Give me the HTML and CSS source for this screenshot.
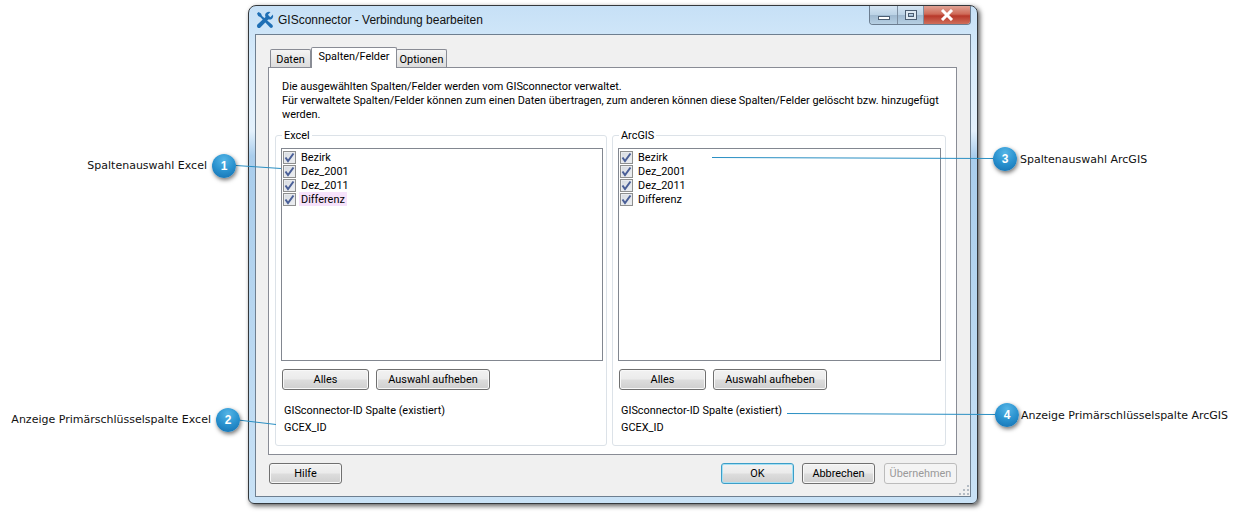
FILE: index.html
```html
<!DOCTYPE html>
<html lang="de">
<head>
  <meta charset="UTF-8" />
  <title>GISconnector - Verbindung bearbeiten</title>
  <link rel="stylesheet" href="styles.css">
</head>
<body>
  <svg width="0" height="0" class="defs">
    <symbol id="check" viewBox="0 0 13 13">
      <path d="M2.500 6.500 L5 10 L10.500 2.500" fill="none" stroke="#4a5f97" stroke-width="2"/>
    </symbol>
  </svg>

  <main class="window">
    <header class="titlebar">
      <svg class="app-icon" width="18" height="18" viewBox="0 0 18 18">
        <path d="M1 2.500 L2.500 1 L5 2.500 L6 5 L16.500 14 Q17.500 15.500 16.300 16.500 Q15 17.500 13.800 16.300 L4.500 6.200 L2.200 5 Z" fill="#1f6fb5"/>
        <path d="M17 3.600 L14.300 6.200 L11.900 3.800 L14.500 1 Q11.400 0 9.700 2.200 Q8.500 4 9.500 6 L1.400 13.600 Q0.300 15.200 1.500 16.400 Q3 17.500 4.400 16.400 L12.200 8.400 Q14.400 9 16.100 7.700 Q17.700 6 17 3.600 Z" fill="#1f6fb5"/>
      </svg>
      <h1 class="title">GISconnector - Verbindung bearbeiten</h1>
      <div class="controls">
        <span class="ctl ctl-min"><i></i></span>
        <span class="ctl ctl-max"><i></i></span>
        <span class="ctl ctl-close">
          <svg width="16" height="12" viewBox="0 0 16 12"><path d="M3 1 L13 11 M13 1 L3 11" stroke="#fff" stroke-width="3" fill="none"/></svg>
        </span>
      </div>
    </header>

    <div class="client">
      <nav class="tabs">
        <span class="tab tab-data">Daten</span>
        <span class="tab active">Spalten/Felder</span>
        <span class="tab tab-opt">Optionen</span>
      </nav>

      <section class="pane">
        <p class="intro">Die ausgewählten Spalten/Felder werden vom GISconnector verwaltet.<br>Für verwaltete Spalten/Felder können zum einen Daten übertragen, zum anderen können diese Spalten/Felder gelöscht bzw. hinzugefügt werden.</p>

        <div class="groups">
          <fieldset class="group group-excel">
            <legend>Excel</legend>
            <ul class="list">
              <li><span class="cb"><svg width="13" height="13"><use href="#check"/></svg></span><span class="lbl">Bezirk</span></li>
              <li><span class="cb"><svg width="13" height="13"><use href="#check"/></svg></span><span class="lbl">Dez_2001</span></li>
              <li><span class="cb"><svg width="13" height="13"><use href="#check"/></svg></span><span class="lbl">Dez_2011</span></li>
              <li><span class="cb"><svg width="13" height="13"><use href="#check"/></svg></span><span class="lbl mark">Differenz</span></li>
            </ul>
            <div class="row">
              <button class="btn btn-all">Alles</button>
              <button class="btn btn-clear">Auswahl aufheben</button>
            </div>
            <p class="id-head">GISconnector-ID Spalte (existiert)</p>
            <p class="id-value">GCEX_ID</p>
          </fieldset>

          <fieldset class="group group-arc">
            <legend>ArcGIS</legend>
            <ul class="list">
              <li><span class="cb"><svg width="13" height="13"><use href="#check"/></svg></span><span class="lbl">Bezirk</span></li>
              <li><span class="cb"><svg width="13" height="13"><use href="#check"/></svg></span><span class="lbl">Dez_2001</span></li>
              <li><span class="cb"><svg width="13" height="13"><use href="#check"/></svg></span><span class="lbl">Dez_2011</span></li>
              <li><span class="cb"><svg width="13" height="13"><use href="#check"/></svg></span><span class="lbl">Differenz</span></li>
            </ul>
            <div class="row">
              <button class="btn btn-all">Alles</button>
              <button class="btn btn-clear">Auswahl aufheben</button>
            </div>
            <p class="id-head">GISconnector-ID Spalte (existiert)</p>
            <p class="id-value">GCEX_ID</p>
          </fieldset>
        </div>
      </section>

      <footer class="footer">
        <button class="btn btn-foot">Hilfe</button>
        <div class="spacer"></div>
        <button class="btn btn-foot btn-ok">OK</button>
        <button class="btn btn-foot btn-cancel">Abbrechen</button>
        <button class="btn btn-foot btn-off">Übernehmen</button>
      </footer>
      <svg class="grip" width="12" height="12" viewBox="0 0 12 12">
        <path d="M9 1h2v2H9zM5 5h2v2H5zM9 5h2v2H9zM1 9h2v2H1zM5 9h2v2H5zM9 9h2v2H9z" fill="#b4bcc4"/>
      </svg>
    </div>
  </main>

  <!-- callouts -->
  <svg class="lines" width="1244" height="514">
    <path d="M236 165.500 L281 168.500" />
    <path d="M238 420 L276 424.500" />
    <path d="M712 157.500 L994 158.500" />
    <path d="M787 413.500 L996 414.500" />
  </svg>
  <span class="note note-1">Spaltenauswahl Excel</span>
  <span class="note note-2">Anzeige Primärschlüsselspalte Excel</span>
  <span class="note note-3">Spaltenauswahl ArcGIS</span>
  <span class="note note-4">Anzeige Primärschlüsselspalte ArcGIS</span>
  <span class="dot dot-1">1</span>
  <span class="dot dot-2">2</span>
  <span class="dot dot-3">3</span>
  <span class="dot dot-4">4</span>
</body>
</html>
```

FILE: styles.css
```css
* { box-sizing: border-box; }
html, body {
  margin: 0;
  padding: 0;
  width: 1244px;
  height: 514px;
  overflow: hidden;
  background: #fff;
  font-family: Roboto, "Liberation Sans", Arial, sans-serif;
  font-size: 10.9px;
  color: #000;
}
.defs { position: absolute; }

/* window */
.window {
  position: absolute;
  left: 248px;
  top: 5px;
  width: 730px;
  height: 499px;
  padding: 0 6px 6px;
  border: 1px solid #34383c;
  border-radius: 8px 8px 6px 6px;
  background: linear-gradient(180deg, #c6e0f6 0, #d9ecfb 60px, #e4f1fc 125px, #a9cdec 150px, #b7d6f0 300px, #c9e2f6 100%);
  box-shadow: 2px 2px 5px rgba(0, 0, 0, 0.65);
  display: flex;
  flex-direction: column;
}
.titlebar {
  height: 28px;
  display: flex;
  align-items: center;
  padding-left: 1px;
  flex: none;
}
.app-icon { flex: none; }
.title {
  margin: 0 0 0 4px;
  font-family: "Liberation Sans", Arial, sans-serif;
  font-size: 12px;
  font-weight: normal;
  color: #111;
}
.controls {
  margin-left: auto;
  margin-top: -10px;
  display: flex;
  height: 19px;
  border: 1px solid #6b7d90;
  border-top: none;
  border-radius: 0 0 4px 4px;
  overflow: hidden;
}
.ctl {
  display: flex;
  align-items: center;
  justify-content: center;
  background: linear-gradient(180deg, #d4e5f3 0, #bcd3e6 48%, #9fb9d0 52%, #b6cfe3 100%);
}
.ctl-min { width: 28px; border-right: 1px solid #7d8fa2; }
.ctl-max { width: 26px; border-right: 1px solid #7d8fa2; }
.ctl-close { width: 46px; background: linear-gradient(180deg, #e0a294 0, #cf6a58 45%, #b8382a 55%, #cf6f5c 100%); }
.ctl-min i {
  display: block;
  width: 12px;
  height: 4px;
  margin-top: 6px;
  background: #fff;
  border: 1px solid #4c5e72;
}
.ctl-max i {
  display: block;
  width: 12px;
  height: 10px;
  border: 1px solid #4c5e72;
  box-shadow: inset 0 0 0 2px #dfeaf3, inset 0 0 0 3px #4c5e72;
}

.client {
  position: relative;
  flex: 1;
  padding: 12px 13px 0 12px;
  background: #f0f0f0;
  border: 1px solid #6e7f90;
  display: flex;
  flex-direction: column;
}

/* tabs */
.tabs {
  display: flex;
  align-items: flex-end;
  height: 21px;
  padding-left: 2px;
  position: relative;
  z-index: 1;
}
.tab {
  height: 18px;
  margin-bottom: 1px;
  padding-top: 3px;
  text-align: center;
  line-height: 14px;
  background: linear-gradient(180deg, #f4f4f4, #dcdcdc);
  border: 1px solid #898c95;
  border-bottom: none;
  border-radius: 2px 2px 0 0;
}
.tab-data { width: 41px; }
.tab-opt { width: 51px; margin-left: -1px; }
.tab.active {
  width: 86px;
  height: 21px;
  margin-bottom: 0;
  padding-top: 2px;
  background: #fff;
  position: relative;
  z-index: 2;
}
.pane {
  height: 388px;
  margin-top: -1px;
  padding: 12px 9px 0 6px;
  background: #fff;
  border: 1px solid #898c95;
}
.intro {
  margin: 0 0 0 7px;
  width: 670px;
  line-height: 14px;
}
.groups {
  display: flex;
  gap: 5px;
  margin-top: 6px;
}
.group {
  margin: 0;
  padding: 0 4px 0 5px;
  border: 1px solid #dce2e8;
  border-radius: 3px;
  min-width: 0;
  height: 318px;
  display: block;
}
.group-excel { width: 332px; padding-right: 3px; }
.group-arc { width: 334px; }
.group legend {
  margin-left: 1px;
  padding: 1px 2px 0;
  line-height: 14px;
  height: 14px;
}
.list {
  list-style: none;
  margin: 6px 0 0;
  padding: 1px 0 0 1px;
  height: 213px;
  border: 1px solid #828790;
  background: #fff;
}
.list li {
  display: flex;
  align-items: center;
  height: 14px;
}
.cb {
  width: 13px;
  height: 13px;
  margin-right: 3px;
  border: 1px solid #8e8f8f;
  background: linear-gradient(135deg, #d6dae0, #eef0f3);
  box-shadow: inset 0 0 0 1px #e9ebee;
  position: relative;
  flex: none;
}
.cb svg { position: absolute; left: -1px; top: -1px; }
.lbl { padding: 1px 2px 0; height: 14px; line-height: 14px; }
.lbl.mark { background: #f6e2fb; }
.row {
  display: flex;
  gap: 7px;
  margin: 8px 0 0 1px;
}
.btn {
  margin: 0;
  padding: 0;
  height: 21px;
  font: inherit;
  color: #000;
  border: 1px solid #707070;
  border-radius: 3px;
  background: linear-gradient(180deg, #f2f2f2 0, #ebebeb 48%, #dddddd 52%, #cfcfcf 100%);
  box-shadow: inset 0 0 0 1px #f8f8f8;
}
.btn-all { width: 87px; }
.btn-clear { width: 114px; }
.id-head {
  margin: 14px 0 0 3px;
  line-height: 14px;
}
.id-value {
  margin: 3px 0 0 3px;
  line-height: 14px;
}

.footer {
  display: flex;
  gap: 8px;
  margin-top: 8px;
  padding-left: 1px;
}
.spacer { flex: 1; }
.btn-foot { width: 73px; }
.btn-ok {
  border-color: #3c9ec8;
  box-shadow: inset 0 0 0 1px #a6e0f4;
}
.btn-cancel { margin-right: 1px; }
.btn-off {
  color: #9a9a9a;
  border-color: #bcbcbc;
  background: #f4f4f4;
  box-shadow: none;
}
.grip { position: absolute; right: 0; bottom: 0; }

/* callouts */
.lines { position: absolute; left: 0; top: 0; pointer-events: none; }
.lines path { fill: none; stroke: #2a8fc3; stroke-width: 1; }
.note {
  position: absolute;
  font-family: "DejaVu Sans", Verdana, sans-serif;
  font-size: 11px;
  line-height: 14px;
  white-space: nowrap;
  color: #111;
}
.note-1 { right: 1037px; top: 159px; }
.note-2 { right: 1033px; top: 413px; }
.note-3 { left: 1020px; top: 153px; }
.note-4 { left: 1021px; top: 409px; }
.dot {
  position: absolute;
  width: 24px;
  height: 24px;
  border-radius: 50%;
  display: flex;
  align-items: center;
  justify-content: center;
  color: #fff;
  font-family: "Liberation Sans", Arial, sans-serif;
  font-weight: bold;
  font-size: 12px;
  background: radial-gradient(circle at 50% 25%, #55b5e6 0, #2a92cf 50%, #126dae 100%);
  box-shadow: 1px 2px 4px rgba(0, 0, 0, 0.55);
}
.dot-1 { left: 212px; top: 154px; }
.dot-2 { left: 216px; top: 408px; }
.dot-3 { left: 993px; top: 147px; }
.dot-4 { left: 995px; top: 403px; }
```
